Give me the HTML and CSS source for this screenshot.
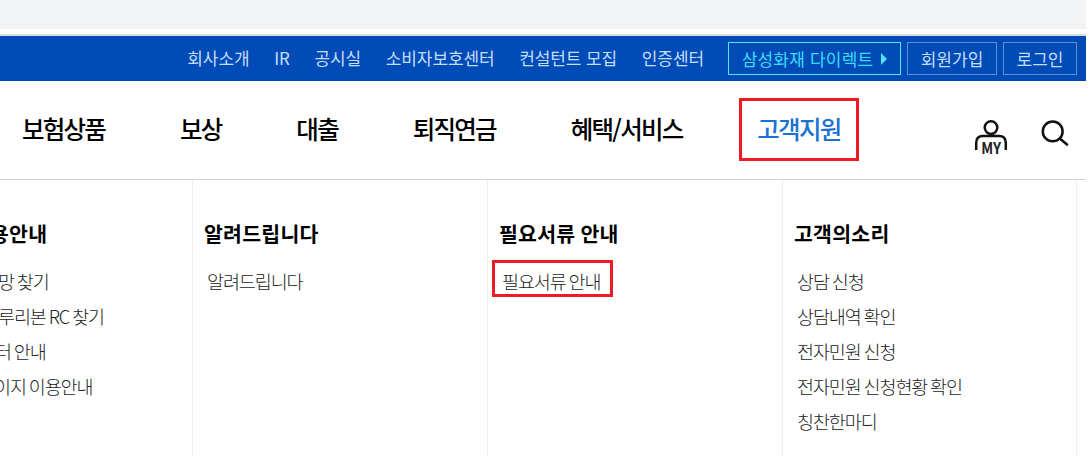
FILE: index.html
```html
<!DOCTYPE html>
<html lang="ko">
<head>
    <meta charset="UTF-8">
    <meta name="viewport" content="width=device-width, initial-scale=1.0">
    <title>고객지원</title>
    <link rel="stylesheet" href="styles.css">
</head>
<body>
    <div class="page">
        <div class="browser-bar"></div>
        <div class="top-bar">
            <ul class="top-links">
                <li>회사소개</li>
                <li>IR</li>
                <li>공시실</li>
                <li>소비자보호센터</li>
                <li>컨설턴트 모집</li>
                <li>인증센터</li>
            </ul>
            <div class="top-buttons">
                <a class="btn direct">삼성화재 다이렉트<span class="arrow"></span></a>
                <a class="btn join">회원가입</a>
                <a class="btn login">로그인</a>
            </div>
        </div>

        <header class="header">
            <ul class="nav">
                <li>보험상품</li>
                <li>보상</li>
                <li>대출</li>
                <li>퇴직연금</li>
                <li>혜택/서비스</li>
                <li class="active">고객지원<span class="mark"></span></li>
            </ul>
            <div class="tools">
                <svg class="icon-my" width="34" height="36" viewBox="0 0 34 36">
                    <circle cx="17" cy="7.6" r="6.3"/>
                    <path d="M2.2 30V23Q2.2 16 9 16H25Q31.8 16 31.8 23V30"/>
                    <text x="7.2" y="34" textLength="20" lengthAdjust="spacingAndGlyphs">MY</text>
                </svg>
                <svg class="icon-search" width="28" height="28" viewBox="0 0 28 28">
                    <circle cx="11.7" cy="11.4" r="9.9"/>
                    <path d="M18.8 18.5L26.8 25.2"/>
                </svg>
            </div>
        </header>

        <div class="menu">
            <div class="col first">
                <h2>용안내</h2>
                <ul>
                    <li class="cut-a">망 찾기</li>
                    <li class="cut-b">루리본 RC 찾기</li>
                    <li class="cut-c">터 안내</li>
                    <li class="cut-d">이지 이용안내</li>
                </ul>
            </div>
            <div class="col">
                <h2>알려드립니다</h2>
                <ul>
                    <li>알려드립니다</li>
                </ul>
            </div>
            <div class="col">
                <h2>필요서류 안내</h2>
                <ul>
                    <li class="marked">필요서류 안내<span class="mark"></span></li>
                </ul>
            </div>
            <div class="col">
                <h2>고객의소리</h2>
                <ul>
                    <li>상담 신청</li>
                    <li>상담내역 확인</li>
                    <li>전자민원 신청</li>
                    <li>전자민원 신청현황 확인</li>
                    <li>칭찬한마디</li>
                </ul>
            </div>
        </div>
    </div>
</body>
</html>
```
FILE: styles.css
```css
* {
    box-sizing: border-box;
    margin: 0;
    padding: 0;
}
body {
    font-family: "Noto Sans CJK KR", sans-serif;
    background-color: #fff;
    color: #000;
    overflow: hidden;
}
ul {
    list-style: none;
}
.page {
    width: 1086px;
    height: 457px;
    overflow: hidden;
    display: flex;
    flex-direction: column;
}
.browser-bar {
    height: 36px;
    background-color: #fff;
    border-top: 29px solid #f1f3f4;
    border-bottom: 2px solid #dadce0;
}

/* top bar */
.top-bar {
    height: 45px;
    padding-right: 9px;
    background-color: #004bb5;
    display: flex;
    justify-content: flex-end;
    align-items: center;
    gap: 24px;
}
.top-links {
    display: flex;
    gap: 24.7px;
    padding-bottom: 1px;
    font-size: 17px;
    line-height: 24px;
    letter-spacing: -0.1px;
    color: #c4deff;
    white-space: nowrap;
}
.top-buttons {
    display: flex;
    gap: 6px;
}
.btn {
    height: 33px;
    border: 1px solid #5d90d6;
    color: #c4deff;
    font-size: 17px;
    line-height: 32px;
    white-space: nowrap;
    display: flex;
    align-items: center;
    justify-content: center;
}
.direct {
    width: 173px;
    border-color: #4fe3ff;
    color: #3cdcff;
    letter-spacing: 0.2px;
}
.join {
    width: 90px;
}
.login {
    width: 74px;
}
.arrow {
    margin-left: 8px;
    border-left: 6px solid #4fe3ff;
    border-top: 6px solid transparent;
    border-bottom: 6px solid transparent;
}

/* main navigation */
.header {
    height: 99px;
    border-bottom: 1px solid #d2d2d2;
    display: flex;
    justify-content: space-between;
    padding: 0 17px 0 22px;
}
.nav {
    display: flex;
    gap: 74.8px;
    font-size: 24.5px;
    font-weight: 500;
    line-height: 36px;
    letter-spacing: -1.75px;
    padding-top: 30px;
    white-space: nowrap;
}
.active {
    position: relative;
    color: #1b72d2;
}
.mark {
    position: absolute;
    border: 3px solid #ed1c24;
}
.active .mark {
    left: -18px;
    top: -13px;
    width: 120px;
    height: 63px;
}
.tools {
    display: flex;
    gap: 33px;
    padding-top: 39px;
}
.tools svg {
    fill: none;
    stroke: #111;
    stroke-width: 2.5;
}
.icon-my text {
    fill: #222;
    stroke: none;
    font-size: 15.5px;
    font-weight: 700;
}

/* sub menu */
.menu {
    flex: 1;
    display: grid;
    grid-template-columns: 193px 295px 295px 294px;
}
.col {
    border-right: 1px solid #eee;
    padding: 37px 0 0 11px;
    white-space: nowrap;
}
.first {
    padding-left: 0;
    overflow: hidden;
}
.col h2 {
    font-size: 20.5px;
    font-weight: 700;
    line-height: 32px;
    letter-spacing: 0.25px;
    word-spacing: -1px;
}
.col ul {
    padding: 15px 0 0 3px;
}
.col li {
    font-size: 18.5px;
    font-weight: 300;
    line-height: 35px;
    letter-spacing: -1.1px;
    word-spacing: -1.2px;
    color: #222;
}
.first ul {
    padding-left: 0;
}
.first h2 {
    margin-left: -10px;
}
.cut-a {
    margin-left: -2px;
}
.cut-b {
    margin-left: -2px;
}
.cut-c {
    margin-left: -5px;
}
.cut-d {
    margin-left: -6px;
}
.marked {
    position: relative;
}
.marked .mark {
    left: -10px;
    top: -4px;
    width: 121px;
    height: 37px;
}
```
